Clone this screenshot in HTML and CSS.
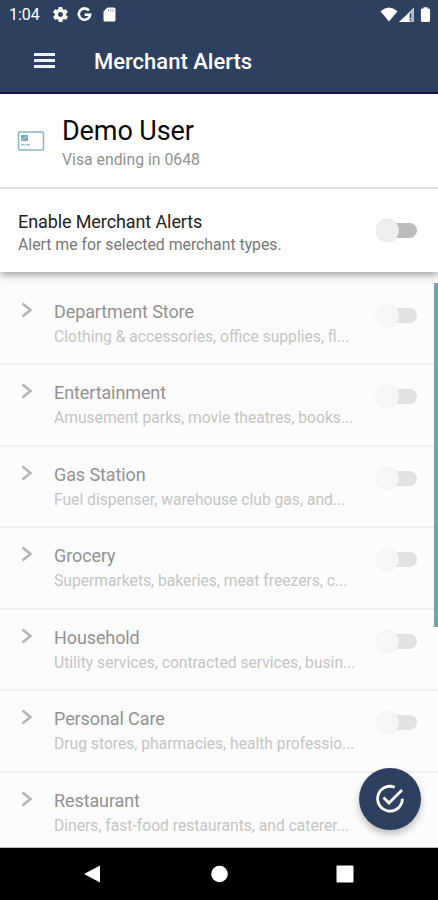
FILE: index.html
```html
<!DOCTYPE html>
<html lang="en">

<head>
    <meta charset="UTF-8">
    <meta name="viewport" content="width=device-width, initial-scale=1.0">
    <title>Merchant Alerts</title>
    <link rel="stylesheet" href="styles.css">
</head>

<body>
    <header class="top">
        <div class="status">
            <span class="time">1:04</span>
            <svg class="gear" width="15" height="15" viewBox="2 2 20 20"><path fill="#fff" fill-rule="evenodd" d="M19.4 13a7.500 7.500 0 0 0 0-2l2.100-1.600a.5.500 0 0 0 .1-.6l-2-3.500a.5.500 0 0 0-.6-.2l-2.500 1a7.300 7.300 0 0 0-1.700-1l-.4-2.600a.5.500 0 0 0-.5-.5h-4a.5.500 0 0 0-.5.500L9 5.100a7.700 7.700 0 0 0-1.700 1l-2.500-1a.5.500 0 0 0-.6.200l-2 3.500a.5.500 0 0 0 .1.600L4.500 11a8 8 0 0 0 0 2l-2.100 1.600a.5.500 0 0 0-.1.600l2 3.500c.1.200.4.300.6.200l2.500-1a7.300 7.300 0 0 0 1.700 1l.4 2.600c0 .3.200.5.500.5h4c.3 0 .5-.2.500-.5l.4-2.600a7.700 7.700 0 0 0 1.700-1l2.500 1c.2.100.5 0 .6-.2l2-3.500a.5.500 0 0 0-.1-.6zM12 15.300a3.300 3.300 0 1 1 0-6.600 3.300 3.300 0 0 1 0 6.600z"/></svg>
            <svg class="google" width="15" height="15" viewBox="0 0 15 15"><path fill="none" stroke="#fff" stroke-width="2.600" d="M12 3.500A5.700 5.700 0 1 0 13.200 7.700H7.600"/></svg>
            <svg class="sdcard" width="13" height="15" viewBox="0 0 13 15"><path fill="#fff" d="M4.600.5H11a1.500 1.500 0 0 1 1.500 1.500v11a1.500 1.500 0 0 1-1.500 1.500H2A1.500 1.500 0 0 1 .5 13V4.600z"/><path stroke="#9aa7ba" d="M5.500 2.200v2.500M7.800 2.200v2.500M10.100 2.200v2.500"/></svg>
            <svg class="signals" width="52" height="16" viewBox="0 0 52 16">
                <path fill="#fff" d="M-.5 4.200Q8 -3 16.500 4.200L8 14.500z"/>
                <path fill="#fff" d="M18 15L33 .5V15z"/>
                <path fill="#b4bdcb" d="M28.500 5L33 .5V15h-4.500z"/>
                <path stroke="#2d405f" stroke-width="1.500" d="M29.500 6.500v4.500M29.500 12.200v1.500"/>
                <path fill="#fff" d="M42.500 1.500V.3h4v1.200h1.200a1.400 1.400 0 0 1 1.400 1.400v10.700a1.400 1.400 0 0 1-1.400 1.400h-6.400a1.400 1.400 0 0 1-1.400-1.400V2.900a1.400 1.400 0 0 1 1.400-1.400z"/>
            </svg>
        </div>
        <div class="bar">
            <div class="menu"><i></i><i></i><i></i></div>
            <h1>Merchant Alerts</h1>
        </div>
    </header>

    <section class="user">
        <svg width="28" height="20" viewBox="0 0 28 20">
            <rect x="1.500" y="1" width="25" height="18" rx="1.500" fill="#fcfeff" stroke="#8ab5c5" stroke-width="1.500"/>
            <rect x="4" y="4" width="7" height="6" rx="1" fill="#78a9bb"/>
            <path stroke="#c5dce4" d="M5.500 8.500l4-3"/>
            <path stroke="#a0c3cf" stroke-width="1.500" stroke-dasharray="4 1" d="M4 13.700h9.500"/>
        </svg>
        <div>
            <h2>Demo User</h2>
            <p>Visa ending in 0648</p>
        </div>
    </section>

    <section class="enable">
        <div>
            <h3>Enable Merchant Alerts</h3>
            <p>Alert me for selected merchant types.</p>
        </div>
        <span class="switch"></span>
    </section>

    <main class="list">
        <div class="item">
            <svg class="arrow" width="12" height="16" viewBox="0 0 12 16"><path d="M1.500 1.500L9.500 8l-8 6.500"/></svg>
            <div class="text">
                <h3>Department Store</h3>
                <p>Clothing &amp; accessories, office supplies, fl...</p>
            </div>
            <span class="switch"></span>
        </div>
        <div class="item">
            <svg class="arrow" width="12" height="16" viewBox="0 0 12 16"><path d="M1.500 1.500L9.500 8l-8 6.500"/></svg>
            <div class="text">
                <h3>Entertainment</h3>
                <p>Amusement parks, movie theatres, books...</p>
            </div>
            <span class="switch"></span>
        </div>
        <div class="item">
            <svg class="arrow" width="12" height="16" viewBox="0 0 12 16"><path d="M1.500 1.500L9.500 8l-8 6.500"/></svg>
            <div class="text">
                <h3>Gas Station</h3>
                <p>Fuel dispenser, warehouse club gas, and...</p>
            </div>
            <span class="switch"></span>
        </div>
        <div class="item">
            <svg class="arrow" width="12" height="16" viewBox="0 0 12 16"><path d="M1.500 1.500L9.500 8l-8 6.500"/></svg>
            <div class="text">
                <h3>Grocery</h3>
                <p>Supermarkets, bakeries, meat freezers, c...</p>
            </div>
            <span class="switch"></span>
        </div>
        <div class="item">
            <svg class="arrow" width="12" height="16" viewBox="0 0 12 16"><path d="M1.500 1.500L9.500 8l-8 6.500"/></svg>
            <div class="text">
                <h3>Household</h3>
                <p>Utility services, contracted services, busin...</p>
            </div>
            <span class="switch"></span>
        </div>
        <div class="item">
            <svg class="arrow" width="12" height="16" viewBox="0 0 12 16"><path d="M1.500 1.500L9.500 8l-8 6.500"/></svg>
            <div class="text">
                <h3>Personal Care</h3>
                <p>Drug stores, pharmacies, health professio...</p>
            </div>
            <span class="switch"></span>
        </div>
        <div class="item">
            <svg class="arrow" width="12" height="16" viewBox="0 0 12 16"><path d="M1.500 1.500L9.500 8l-8 6.500"/></svg>
            <div class="text">
                <h3>Restaurant</h3>
                <p>Diners, fast-food restaurants, and caterer...</p>
            </div>
        </div>
        <div class="scroll"></div>
        <div class="fab">
            <svg width="30" height="30" viewBox="0 0 30 30" fill="none" stroke="#fff" stroke-width="2.800">
                <path d="M19.800 3.300A12.400 12.400 0 1 0 27.400 14.800"/>
                <path d="M8.500 13.500l5.500 5.500L27 6"/>
            </svg>
        </div>
    </main>

    <nav class="nav">
        <svg width="270" height="18" viewBox="0 0 270 18" fill="#fff">
            <path d="M0 9L16 .5v17z"/>
            <circle cx="135.500" cy="9" r="8.300"/>
            <rect x="252.500" y=".5" width="17" height="17" rx="1"/>
        </svg>
    </nav>
</body>

</html>
```
FILE: styles.css
```css
* {
    padding: 0;
    margin: 0;
    box-sizing: border-box;
}

body {
    height: 900px;
    display: flex;
    flex-direction: column;
    font-family: Roboto, sans-serif;
    background-color: #fff;
    overflow: hidden;
}

h1,
h2,
h3 {
    font-weight: 400;
}

p,
h1,
h2,
h3 {
    white-space: nowrap;
}

h3 {
    letter-spacing: -0.1px;
}

.top {
    height: 94px;
    background-color: #2d405f;
    border-bottom: 2px solid #101050;
    color: #fff;
}

.status {
    height: 29px;
    display: flex;
    align-items: center;
    padding-left: 9px;
}

.time {
    width: 44px;
    font-size: 16px;
}

.google {
    margin-left: 9px;
}

.sdcard {
    margin-left: 11px;
}

.signals {
    margin-left: auto;
    margin-right: 5px;
    overflow: visible;
}

.bar {
    height: 65px;
    display: flex;
    align-items: center;
    padding-left: 34px;
}

.menu {
    width: 60px;
    display: flex;
    flex-direction: column;
    gap: 3px;
    margin-top: -3px;
}

.menu i {
    width: 21px;
    height: 3px;
    background-color: #eef1f6;
}

.bar h1 {
    font-size: 22px;
    font-weight: 500;
}

.user {
    height: 95px;
    display: flex;
    align-items: center;
    padding-left: 17px;
    gap: 17px;
    border-bottom: 2px solid #dedede;
}

.user h2 {
    margin-top: 5px;
    font-size: 27px;
    line-height: 32px;
    letter-spacing: -0.1px;
    color: #0a0a0a;
}

.user p {
    font-size: 15.8px;
    line-height: 25px;
    color: #929292;
}

.enable {
    height: 83px;
    display: flex;
    align-items: center;
    justify-content: space-between;
    padding: 0 21px 0 18px;
    background-color: #fff;
    box-shadow: 0 2px 9px rgba(0, 0, 0, 0.45);
    clip-path: inset(0 0 -14px 0);
    position: relative;
    z-index: 1;
}

.enable h3 {
    margin-top: 4px;
    font-size: 18px;
    line-height: 23px;
    color: #222;
}

.enable p {
    font-size: 15.8px;
    line-height: 23px;
    color: #777;
}

/* off state, the knob covers the left end of the track */
.switch {
    width: 41px;
    height: 23px;
    flex: none;
    display: flex;
    align-items: center;
    background: linear-gradient(#bcbcbc, #bcbcbc) no-repeat 20px 4px / 10px 15px;
}

.switch::before {
    content: "";
    width: 23px;
    height: 23px;
    border-radius: 50%;
    background-color: #eee;
    box-shadow: 0 0 1px rgba(0, 0, 0, 0.2);
}

.switch::after {
    content: "";
    width: 18px;
    height: 15px;
    border-radius: 0 8px 8px 0;
    background-color: #bcbcbc;
}

.list {
    flex: 1;
    min-height: 0;
    padding-top: 11.5px;
    position: relative;
    background-color: #fcfcfc;
    border-bottom: 1px solid #bbb;
    overflow: hidden;
}

.item {
    height: 81.5px;
    display: flex;
    padding: 16px 21px 0 21px;
    border-bottom: 2px solid #f0f0f0;
}

.arrow {
    flex: none;
    margin-top: 2px;
    fill: none;
    stroke: #b5b5b5;
    stroke-width: 2.500;
}

.text {
    flex: 1;
    padding-left: 21px;
}

.text h3 {
    font-size: 18px;
    line-height: 24px;
    color: #929292;
}

.text p {
    font-size: 15.65px;
    line-height: 26px;
    color: #c4c4c4;
}

.item .switch {
    margin-top: 4px;
    opacity: 0.4;
}

.scroll {
    position: absolute;
    top: 11px;
    right: 0;
    width: 4px;
    height: 344px;
    background-color: #6fa3b1;
}

.fab {
    position: absolute;
    right: 17px;
    bottom: 17px;
    width: 62px;
    height: 62px;
    display: flex;
    align-items: center;
    justify-content: center;
    border-radius: 50%;
    background-color: #2d405f;
    box-shadow: 0 4px 7px rgba(0, 0, 0, 0.25);
}

.nav {
    height: 52px;
    background-color: #000;
    padding: 17px 0 0 84px;
}
```
